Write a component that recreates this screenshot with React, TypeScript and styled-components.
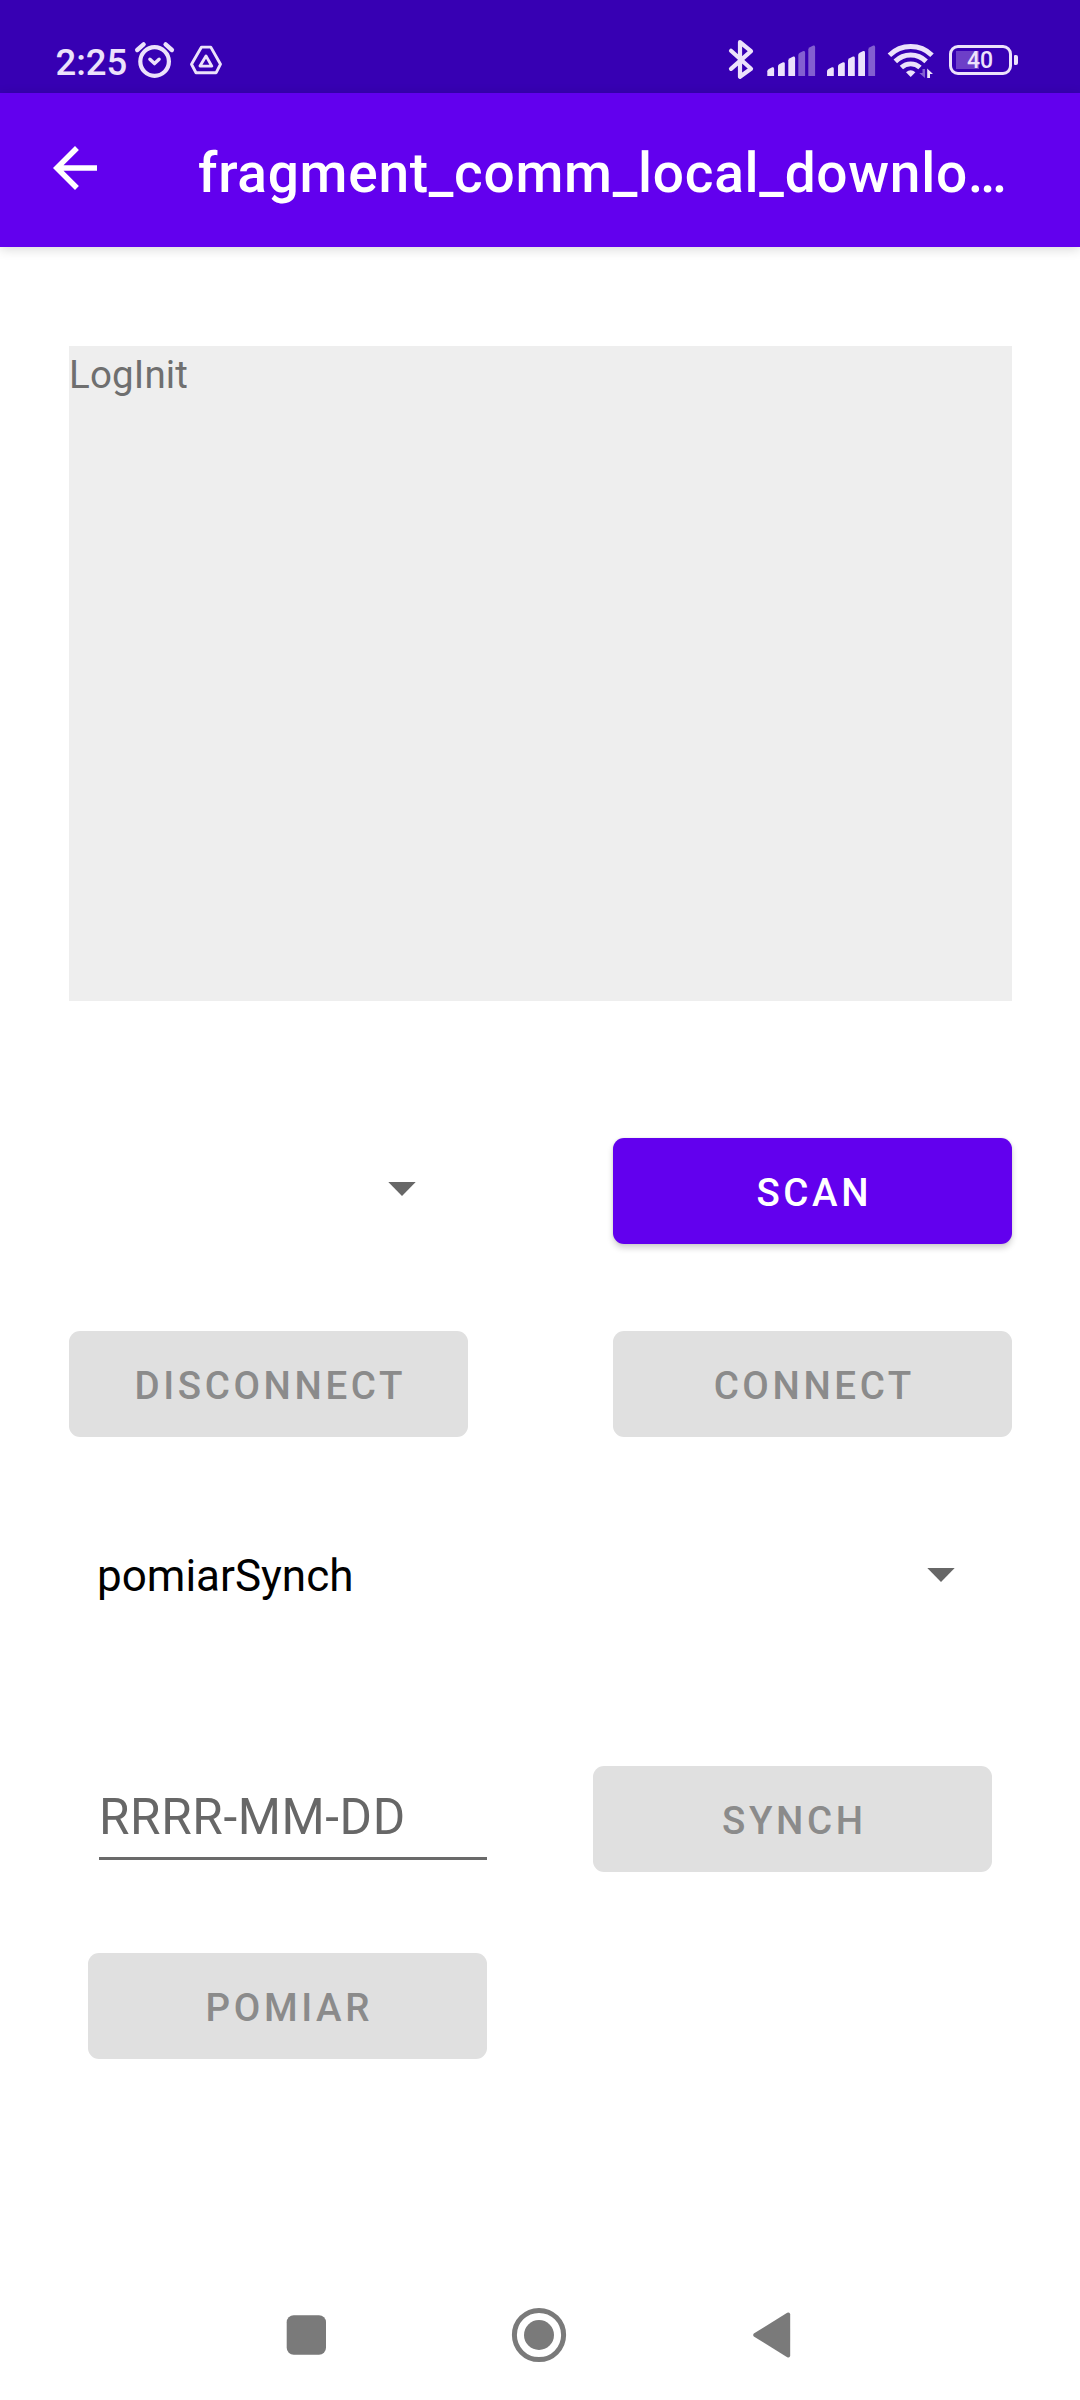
import React from "react";
import styled, { createGlobalStyle, css } from "styled-components";

const GlobalStyle = createGlobalStyle`
  *, *::before, *::after { box-sizing: border-box; }
  body { margin: 0; background: #fff; font-family: Roboto, "Noto Sans", sans-serif; }
`;

const Screen = styled.div`
  display: flex;
  flex-direction: column;
  width: 1080px;
  height: 2400px;
  background: #fff;
  overflow: hidden;
`;

const StatusBar = styled.header`
  display: flex;
  justify-content: space-between;
  height: 93px;
  flex: none;
  padding: 0 62px 0 55px;
  background: #3700b3;
  color: #ece2fb;
`;

const StatusGroup = styled.div`
  display: flex;
  height: 93px;
`;

const Clock = styled.span`
  width: 77px;
  padding: 41px 0 0 0.5px;
  font-size: 36.5px;
  line-height: 43px;
  font-weight: 500;
`;

const StatusIcon = styled.svg`
  display: block;
  flex: none;
  height: 93px;
`;

const Battery = styled.div`
  display: flex;
  align-items: center;
  gap: 2px;
  height: 30px;
  margin: 45px 0 0 12px;
`;

const BatteryShell = styled.div`
  display: flex;
  align-items: center;
  justify-content: center;
  width: 63px;
  height: 30px;
  padding: 2px 1px 0 0;
  border: 3px solid #ece2fb;
  border-radius: 9px;
  background: linear-gradient(#6d3fc8, #6d3fc8) 4px 3px / 23px 18px no-repeat;
  font-size: 23px;
  line-height: 24px;
  font-weight: 500;
`;

const BatteryTip = styled.div`
  width: 4px;
  height: 10px;
  border-radius: 1px 2px 2px 1px;
  background: #ece2fb;
`;

const AppBar = styled.div`
  display: flex;
  flex: none;
  height: 154px;
  background: #6200ee;
  color: #fff;
  box-shadow: 0 2px 11px rgba(0, 0, 0, 0.16);
`;

const BackButton = styled.button`
  width: 66px;
  height: 66px;
  margin: 42px 90px 0 42px;
  padding: 0;
  border: 0;
  background: none;
  color: inherit;
`;

const Title = styled.h1`
  margin: 48px 0 0;
  width: 816px;
  font-size: 55px;
  line-height: 64px;
  font-weight: 500;
  letter-spacing: 0.72px;
  white-space: nowrap;
  overflow: hidden;
`;

const Content = styled.main`
  display: flex;
  flex-direction: column;
  flex: 1;
  padding: 99px 68px 0 69px;
`;

const LogPanel = styled.section`
  height: 655px;
  background: #eeeeee;
  color: #6f6f6f;
  font-size: 38.5px;
  line-height: 45px;
  letter-spacing: 0.15px;
  padding-top: 6px;
`;

const Row = styled.div<{ $top: number; $inset?: boolean }>`
  display: flex;
  justify-content: space-between;
  align-items: center;
  height: 106px;
  margin-top: ${(p) => p.$top}px;
  ${(p) => p.$inset && css`padding: 0 20px 0 19px;`}
`;

const Button = styled.button<{ $primary?: boolean }>`
  width: 399px;
  height: 106px;
  padding: 3px 0 0 3.6px;
  border: 0;
  border-radius: 11px;
  font-family: inherit;
  font-size: 38.5px;
  line-height: 45px;
  font-weight: 500;
  letter-spacing: 3.6px;
  color: ${(p) => (p.$primary ? "#fff" : "#8b8b8b")};
  background: ${(p) => (p.$primary ? "#6200ee" : "#e0e0e0")};
  box-shadow: ${(p) => (p.$primary ? "0 4px 6px rgba(0,0,0,0.18), 0 0 3px rgba(0,0,0,0.08)" : "none")};
`;

const Spinner = styled.div<{ $width: number; $raise?: number }>`
  display: flex;
  align-items: center;
  justify-content: space-between;
  width: ${(p) => p.$width}px;
  height: 66px;
  margin-bottom: ${(p) => (p.$raise ?? 0) * 2}px;
  padding-left: 28px;
  color: #000;
`;

const SpinnerValue = styled.span`
  padding-top: 2px;
  font-size: 44px;
  line-height: 52px;
`;

const Caret = styled.svg`
  display: block;
  width: 28px;
  height: 14px;
  fill: #676767;
`;

const DateInput = styled.input`
  align-self: flex-start;
  width: 388px;
  height: 90px;
  margin: 4px 0 0 11px;
  padding: 7px 0 0;
  border: 0;
  border-bottom: 3px solid #6a6a6a;
  border-radius: 0;
  outline: 0;
  background: none;
  font-family: inherit;
  font-size: 49.5px;
  letter-spacing: 0.6px;
  &::placeholder { color: #676767; opacity: 1; }
`;

const NavBar = styled.nav`
  display: flex;
  justify-content: space-between;
  align-items: center;
  height: 130px;
  flex: none;
  padding: 0 288px 0 286px;
`;

const NavIcon = styled.svg`
  display: block;
  fill: #7a7a7a;
`;

const Signal = ({ x, level, bars }: { x: number; level: number; bars: number[] }) => (
  <StatusIcon width={60} viewBox={`${x} 0 60 93`} fill="currentColor">
    {bars.map((left, i) => {
      const top = [67.3, 62.2, 56.5, 51, 45.6][i];
      return (
        <path
          key={i}
          opacity={i < level ? 1 : 0.42}
          d={`M${left} 76V${top + 4}Q${left} ${top + 2.5} ${left + 1.5} ${top + 1.7}L${left + 5} ${top}Q${left + 6.8} ${top - 0.3} ${left + 6.8} ${top + 1.4}V76Z`}
        />
      );
    })}
  </StatusIcon>
);

const DropCaret = () => (
  <Caret viewBox="0 0 28 14">
    <path d="M0.3 0H27.7L14 13.9Z" />
  </Caret>
);

export default function App() {
  return (
    <>
      <GlobalStyle />
      <Screen>
        <StatusBar>
          <StatusGroup>
            <Clock>2:25</Clock>
            <StatusIcon width={48} viewBox="132 0 48 93" fill="none" stroke="currentColor" strokeLinecap="round">
              <circle cx="154.6" cy="61.5" r="14.3" strokeWidth="4.2" />
              <path d="M149.9 59.2L154.5 63.6L159.1 59.2" strokeWidth="3.4" strokeLinejoin="round" />
              <path d="M137.2 50L143.6 44.4M165.6 44.4L171.9 50" strokeWidth="4.4" />
            </StatusIcon>
            <StatusIcon width={50} viewBox="180 0 50 93" fill="none" stroke="currentColor" strokeLinejoin="round">
              <path d="M201.5 47.1H210.8L220.5 64.2L216.2 72.7H196L191.5 64.2Z" strokeWidth="2.9" />
              <path d="M206 55.9L211.8 66.1H200Z" strokeWidth="2.9" />
            </StatusIcon>
          </StatusGroup>
          <StatusGroup>
            <StatusIcon width={43} viewBox="722 0 43 93" fill="none" stroke="currentColor" strokeWidth="4.2" strokeLinejoin="round" strokeLinecap="round">
              <path d="M731 50.8L751 68.8L740 76.8V42.2L751 51.2L731 68.8" />
            </StatusIcon>
            <Signal x={765} level={3} bars={[767.3, 778, 788.3, 798.3, 808.3]} />
            <Signal x={825} level={4} bars={[827, 838, 848, 858.2, 868.3]} />
            <StatusIcon width={52} viewBox="885 0 52 93" fill="none" stroke="currentColor">
              <path d="M889.4 55.3A30.4 30.4 0 0 1 932 55.3" strokeWidth="5" />
              <path d="M895.3 61.4A22 22 0 0 1 926.1 61.4" strokeWidth="5" />
              <path d="M901.4 67.6A13.5 13.5 0 0 1 920 67.6" strokeWidth="4.8" />
              <path d="M906 72.3Q910.7 68.1 915.4 72.3L910.7 77Z" fill="currentColor" stroke="none" />
              <path d="M925 69V78L919.3 73H922.5V69Z" fill="currentColor" opacity="0.42" stroke="none" />
              <path d="M927.2 78V68.5L933 74H930V78Z" fill="currentColor" stroke="none" />
            </StatusIcon>
            <Battery>
              <BatteryShell>40</BatteryShell>
              <BatteryTip />
            </Battery>
          </StatusGroup>
        </StatusBar>

        <AppBar>
          <BackButton aria-label="Back">
            <svg width="66" height="66" viewBox="0 0 24 24" fill="currentColor">
              <path d="M20 11H7.83l5.59-5.59L12 4l-8 8 8 8 1.41-1.41L7.83 13H20v-2z" />
            </svg>
          </BackButton>
          <Title>fragment_comm_local_downlo…</Title>
        </AppBar>

        <Content>
          <LogPanel>LogInit</LogPanel>
          <Row $top={137}>
            <Spinner $width={347} $raise={2}>
              <SpinnerValue />
              <DropCaret />
            </Spinner>
            <Button $primary>SCAN</Button>
          </Row>
          <Row $top={87}>
            <Button disabled>DISCONNECT</Button>
            <Button disabled>CONNECT</Button>
          </Row>
          <Row $top={85}>
            <Spinner $width={886}>
              <SpinnerValue>pomiarSynch</SpinnerValue>
              <DropCaret />
            </Spinner>
          </Row>
          <Row $top={138} $inset>
            <DateInput placeholder="RRRR-MM-DD" />
            <Button disabled>SYNCH</Button>
          </Row>
          <Row $top={81} $inset>
            <Button disabled>POMIAR</Button>
          </Row>
        </Content>

        <NavBar>
          <NavIcon width="40" height="40" viewBox="0 0 40 40">
            <rect x="0.7" y="0.2" width="39.3" height="39.6" rx="7" />
          </NavIcon>
          <NavIcon width="56" height="56" viewBox="0 0 56 56">
            <circle cx="28" cy="28" r="24.6" fill="none" stroke="#7a7a7a" strokeWidth="5" />
            <circle cx="28" cy="28" r="15" />
          </NavIcon>
          <NavIcon width="40" height="48" viewBox="0 0 40 48">
            <path d="M1.8 22.5Q0.6 24 1.8 25.5L35.2 46.3Q38 47.4 38.2 44.5V3.5Q38 0.6 35.2 1.7Z" />
          </NavIcon>
        </NavBar>
      </Screen>
    </>
  );
}
